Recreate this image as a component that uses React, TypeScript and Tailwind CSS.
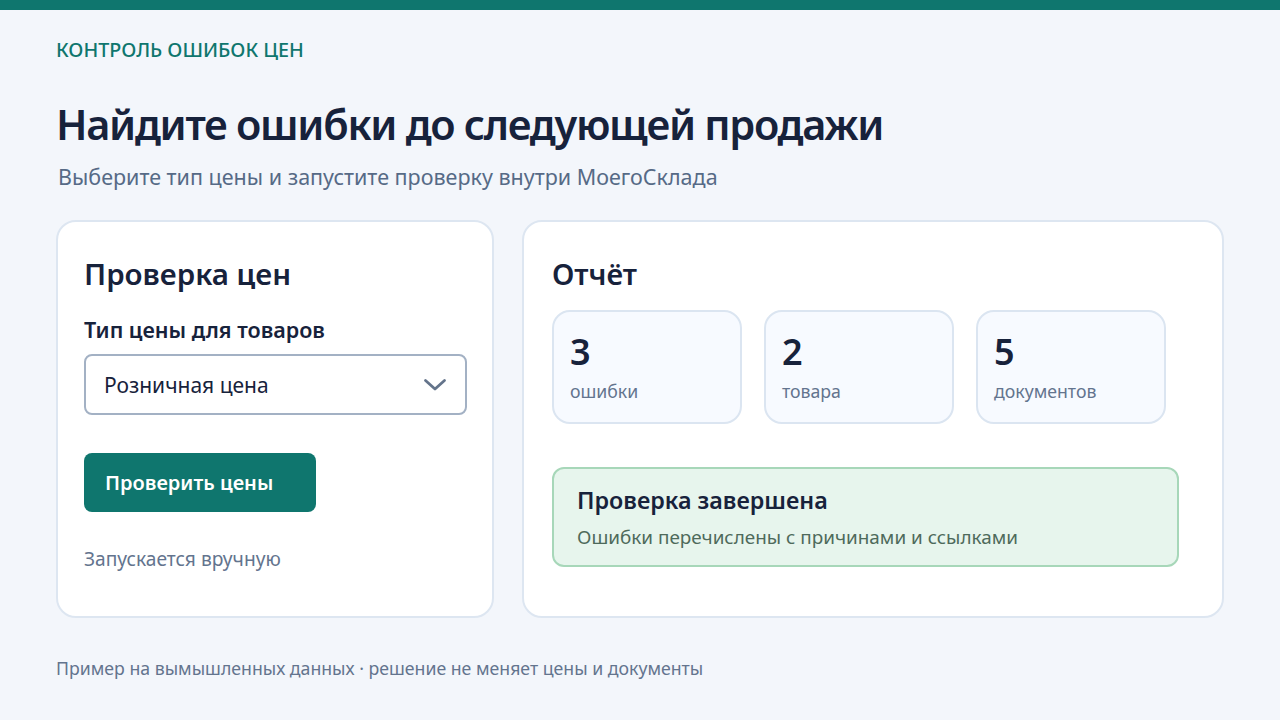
import React from "react";

export default function App() {
  return (
    <div
      className="min-h-[720px] w-full bg-[#f3f6fb] text-[#17223b]"
      style={{ fontFamily: '"Noto Sans", "Open Sans", sans-serif' }}
    >
      <div className="h-[10px] bg-[#0f766e]" />
      <div className="px-[56px]">
        <div className="pt-[27px] text-[19.7px] font-medium leading-[26px] text-[#0f766e]">
          КОНТРОЛЬ ОШИБОК ЦЕН
        </div>
        <h1 className="mt-[33px] text-[41.5px] font-semibold leading-[56px] tracking-[-1.3px] text-[#17223b]">
          Найдите ошибки до следующей продажи
        </h1>
        <p className="mt-[10px] pl-[2px] text-[21.5px] leading-[30px] text-[#566a86]">
          Выберите тип цены и запустите проверку внутри МоегоСклада
        </p>

        <div className="mt-[28px] flex gap-[28px]">
          <div className="h-[398px] w-[438px] rounded-[20px] border-2 border-[#dde6f1] bg-white px-[26px] pt-[32px]">
            <h2 className="text-[29.5px] font-semibold leading-[40px]">Проверка цен</h2>
            <div className="mt-[22px] text-[21.5px] font-semibold leading-[28px]">
              Тип цены для товаров
            </div>
            <div className="mt-[10px] flex h-[61px] w-[383px] items-center justify-between rounded-[8px] border-2 border-[#a3b1c4] pl-[18px] pr-[18px]">
              <span className="text-[21px] leading-[28px] text-[#17223b]">Розничная цена</span>
              <svg width="24" height="24" viewBox="0 0 24 24" fill="none">
                <path d="M2.5 7.5l9.5 8.5 9.5-8.5" stroke="#64748b" strokeWidth="2.8" strokeLinecap="round" strokeLinejoin="round" />
              </svg>
            </div>
            <button className="mt-[38px] flex h-[59px] w-[232px] items-center rounded-[8px] bg-[#0f766e] pl-[21px] text-[20px] font-semibold text-white">
              Проверить цены
            </button>
            <div className="mt-[34px] text-[19.2px] leading-[26px] text-[#63748e]">
              Запускается вручную
            </div>
          </div>

          <div className="h-[398px] w-[703px] rounded-[20px] border-2 border-[#dde6f1] bg-white px-[28px] pt-[32px]">
            <h2 className="text-[29px] font-semibold leading-[40px]">Отчёт</h2>
            <div className="mt-[16px] flex gap-[22px]">
              {[
                ["3", "ошибки"],
                ["2", "товара"],
                ["5", "документов"],
              ].map(([n, l]) => (
                <div
                  key={l}
                  className="h-[114px] w-[190px] rounded-[18px] border-2 border-[#dbe5f1] bg-[#f7faff] px-[16px] pt-[20px]"
                >
                  <div className="text-[36px] font-semibold leading-[40px] text-[#17223b]">{n}</div>
                  <div className="mt-[6px] text-[17.7px] leading-[26px] text-[#63748e]">{l}</div>
                </div>
              ))}
            </div>
            <div className="mt-[43px] h-[100px] w-[627px] rounded-[12px] border-2 border-[#a7d7b9] bg-[#e7f5ed] px-[23px] pt-[15px]">
              <div className="text-[23.3px] font-semibold leading-[32px] text-[#17223b]">Проверка завершена</div>
              <div className="mt-[8px] text-[18.9px] leading-[26px] text-[#4e6a5b]">
                Ошибки перечислены с причинами и ссылками
              </div>
            </div>
          </div>
        </div>

        <p className="mt-[37px] text-[17.7px] leading-[26px] text-[#63748e]">
          Пример на вымышленных данных · решение не меняет цены и документы
        </p>
      </div>
    </div>
  );
}
